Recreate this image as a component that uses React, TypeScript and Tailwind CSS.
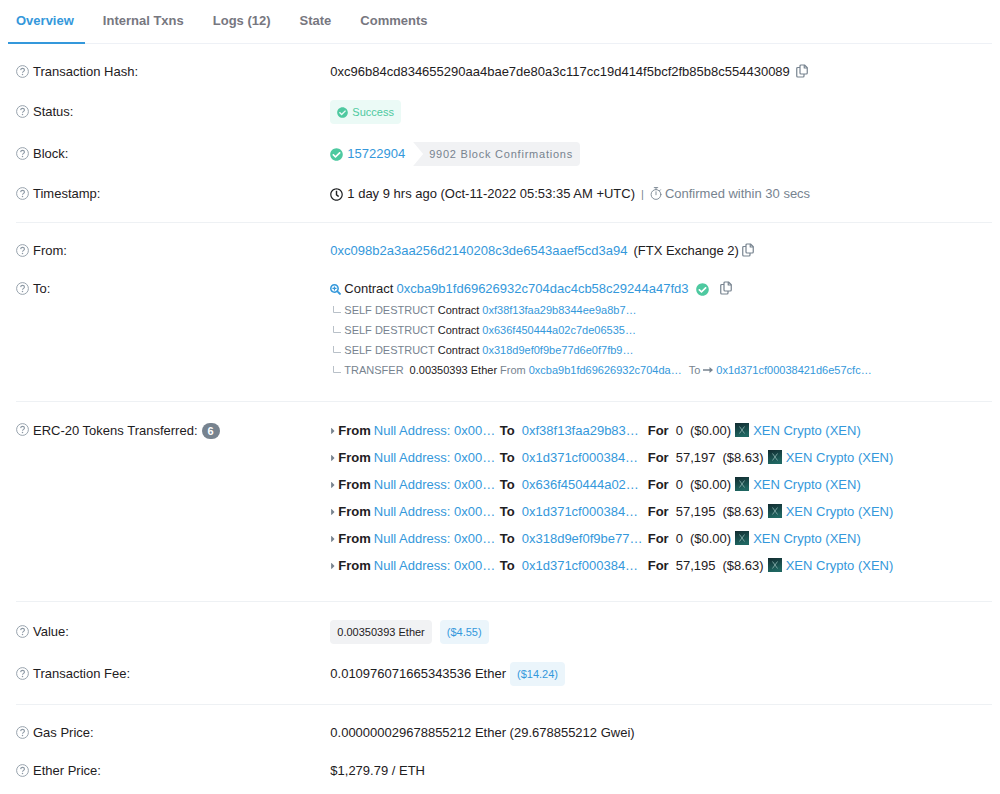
import React from "react";
import { FaCheckCircle, FaRegClock, FaCaretRight, FaSearchPlus } from "react-icons/fa";

const tabs = ["Overview", "Internal Txns", "Logs (12)", "State", "Comments"];

const destructed = ["0xf38f13faa29b8344ee9a8b7…", "0x636f450444a02c7de06535…", "0x318d9ef0f9be77d6e0f7fb9…"];

const transfers = [
  { to: "0xf38f13faa29b83…", amount: "0", usd: "($0.00)" },
  { to: "0x1d371cf000384…", amount: "57,197", usd: "($8.63)" },
  { to: "0x636f450444a02…", amount: "0", usd: "($0.00)" },
  { to: "0x1d371cf000384…", amount: "57,195", usd: "($8.63)" },
  { to: "0x318d9ef0f9be77…", amount: "0", usd: "($0.00)" },
  { to: "0x1d371cf000384…", amount: "57,195", usd: "($8.63)" },
];

const HelpIcon = () => (
  <svg viewBox="0 0 26 26" className="mb-[2px] size-[13px] shrink-0 text-[#8c98a4]" fill="none" stroke="currentColor" strokeWidth="1.8" aria-hidden="true">
    <circle cx="13" cy="13" r="11.8" />
    <path d="M9.3 10.2c.2-2.2 1.6-3.5 3.8-3.5s3.8 1.3 3.8 3.3c0 2.8-3.8 2.8-3.8 5.6" strokeWidth="2.2" />
    <circle cx="13" cy="19" r="1.5" fill="currentColor" stroke="none" />
  </svg>
);

const CopyButton = () => (
  <button type="button" aria-label="Copy" className="mb-[2px] shrink-0 cursor-pointer text-[#77838f]">
    <svg viewBox="0 0 24 28" className="h-[14px] w-3" fill="none" stroke="currentColor" strokeWidth="2.4" strokeLinejoin="round" aria-hidden="true">
      <path d="M10 2h7l5.500 5.500V18a2 2 0 0 1-2 2H10a2 2 0 0 1-2-2V4a2 2 0 0 1 2-2Z" />
      <path d="M16.500 2v6h6" />
      <path d="M8 7H3.500a2 2 0 0 0-2 2v15a2 2 0 0 0 2 2H14a2 2 0 0 0 2-2v-4" />
    </svg>
  </button>
);

const StopwatchIcon = () => (
  <svg viewBox="0 0 24 26" className="mb-[2px] h-[13px] w-3 shrink-0" fill="none" stroke="currentColor" strokeWidth="1.8" strokeLinecap="round" aria-hidden="true">
    <circle cx="12" cy="15" r="9.8" />
    <path d="M8.5 1.2h7M12 1.2v4M12 9.5v6M19 7.500l2-2" />
  </svg>
);

const BranchIcon = () => (
  <svg viewBox="0 0 8 8" className="ml-[3px] size-[8px] shrink-0 text-[#b8c0c8]" fill="none" stroke="currentColor" aria-hidden="true">
    <path d="M.5 0v6.500H8" />
  </svg>
);

const ArrowIcon = () => (
  <svg viewBox="0 0 20 12" className="h-[6px] w-[10px] shrink-0" fill="currentColor" aria-hidden="true">
    <path d="M0 4.400h13V0l7 6-7 6V7.600H0Z" />
  </svg>
);

const XenLogo = () => (
  <svg viewBox="0 0 28 28" className="mb-[2px] size-[14px] shrink-0" aria-hidden="true">
    <defs>
      <linearGradient id="xen" x1="0" y1="0" x2="0.3" y2="1">
        <stop offset="0" stopColor="#122b30" />
        <stop offset="1" stopColor="#1f6661" />
      </linearGradient>
    </defs>
    <rect width="28" height="28" fill="url(#xen)" />
    <path d="m9 7 10 14M19 7 9 21" stroke="#8fb5b3" strokeWidth="1.6" />
  </svg>
);

const Link = ({ children }: { children: React.ReactNode }) => (
  <a href="#" className="text-[#3498db] hover:underline">{children}</a>
);

type RowProps = { label: string; count?: number; className?: string; children: React.ReactNode };

const Row = ({ label, count, className = "items-center", children }: RowProps) => (
  <div className={`flex ${className}`}>
    <dt className="flex w-[32%] shrink-0 items-center gap-1">
      <HelpIcon />
      {label}
      {count && (
        <span className="rounded-full bg-[#77838f] px-[6px] text-[11px] leading-4 font-bold text-white">{count}</span>
      )}
    </dt>
    <dd className="min-w-0 flex-1 pl-[2px]">{children}</dd>
  </div>
);

const Section = ({ className, children }: { className: string; children: React.ReactNode }) => (
  <dl className={`ml-2 flex flex-col border-b border-[#eef1f4] ${className}`}>{children}</dl>
);

const App = () => {
  return (
    <main className="bg-white px-2 font-['Liberation_Sans',Arial,sans-serif] text-[13px] leading-5 whitespace-nowrap text-[#1e2022]">
      <nav className="flex gap-[10px] border-b border-[#eef1f6] font-bold text-[#77777f]">
        {tabs.map((tab, i) => (
          <a
            key={tab}
            href="#"
            className={`py-[11px] pr-[11px] pl-2 ${i === 0 ? "-mb-px border-b-2 border-[#3498db] text-[#3498db]" : ""}`}
          >
            {tab}
          </a>
        ))}
      </nav>

      <Section className="gap-[18px] py-[18px]">
        <Row label="Transaction Hash:">
          <div className="flex items-center gap-[6px]">
            0xc96b84cd834655290aa4bae7de80a3c117cc19d414f5bcf2fb85b8c554430089
            <CopyButton />
          </div>
        </Row>
        <Row label="Status:">
          <span className="inline-flex items-center gap-1 rounded bg-[#ebfaf6] px-[7px] py-[2px] text-[11px] text-[#4ec9a0]">
            <FaCheckCircle className="size-[11px]" />
            Success
          </span>
        </Row>
        <Row label="Block:">
          <div className="flex items-center">
            <FaCheckCircle className="mr-1 size-[13px] text-[#4ec9a0]" />
            <Link>15722904</Link>
            <span className="ml-2 rounded-r bg-[#f1f2f4] py-[2px] pr-[7px] pl-4 text-[11px] tracking-[0.07em] text-[#77838f] [clip-path:polygon(0_0,100%_0,100%_100%,0_100%,10px_50%)]">
              9902 Block Confirmations
            </span>
          </div>
        </Row>
        <Row label="Timestamp:">
          <div className="flex items-center gap-1">
            <FaRegClock className="size-[13px]" />
            1 day 9 hrs ago (Oct-11-2022 05:53:35 AM +UTC)
            <span className="mx-[2px] text-[11px] text-[#77838f]">|</span>
            <span className="flex items-center gap-[3px] text-[#77838f]">
              <StopwatchIcon />
              Confirmed within 30 secs
            </span>
          </div>
        </Row>
      </Section>

      <Section className="gap-[18px] pt-[18px] pb-[21px]">
        <Row label="From:">
          <div className="flex items-center gap-[3px]">
            <Link>0xc098b2a3aa256d2140208c3de6543aaef5cd3a94</Link>
            <span className="ml-[3px]">(FTX Exchange 2)</span>
            <CopyButton />
          </div>
        </Row>
        <Row label="To:" className="items-start">
          <div className="flex items-center gap-[3px]">
            <FaSearchPlus className="size-[11px] text-[#3498db]" />
            Contract
            <Link>0xcba9b1fd69626932c704dac4cb58c29244a47fd3</Link>
            <FaCheckCircle className="mx-1 size-[13px] text-[#4ec9a0]" />
            <span className="ml-1 flex">
              <CopyButton />
            </span>
          </div>
          <ul className="mt-px text-[11px]">
            {destructed.map((address) => (
              <li key={address} className="flex items-center gap-[3px]">
                <BranchIcon />
                <span className="text-[#77838f]">SELF DESTRUCT</span>
                Contract
                <Link>{address}</Link>
              </li>
            ))}
            <li className="flex items-center gap-[3px]">
              <BranchIcon />
              <span className="mr-[3px] text-[#77838f]">TRANSFER</span>
              0.00350393 Ether
              <span className="text-[#77838f]">From</span>
              <Link>0xcba9b1fd69626932c704da…</Link>
              <span className="ml-1 flex items-center gap-[3px] text-[#77838f]">
                To
                <ArrowIcon />
              </span>
              <Link>0x1d371cf00038421d6e57cfc…</Link>
            </li>
          </ul>
        </Row>
      </Section>

      <Section className="pt-[15px] pb-[22px]">
        <Row label="ERC-20 Tokens Transferred:" count={6} className="items-start leading-[27px]">
          <ul>
            {transfers.map((transfer, i) => (
              <li key={i} className="flex items-center">
                <FaCaretRight className="mr-[2px] h-[10px] w-[6px] text-[#77838f]" />
                <b className="mr-[3px]">From</b>
                <span className="w-[122px]">
                  <Link>Null Address: 0x00…</Link>
                </span>
                <b className="mx-1">To</b>
                <span className="ml-[3px] w-[122px]">
                  <Link>{transfer.to}</Link>
                </span>
                <b className="mx-1">For</b>
                <span className="ml-[3px]">{transfer.amount}</span>
                <span className="mr-1 ml-[7px]">{transfer.usd}</span>
                <XenLogo />
                <span className="ml-1">
                  <Link>XEN Crypto (XEN)</Link>
                </span>
              </li>
            ))}
          </ul>
        </Row>
      </Section>

      <Section className="gap-[18px] py-[18px]">
        <Row label="Value:">
          <div className="flex gap-2 text-[11px]">
            <span className="rounded bg-[#f1f2f4] px-[7px] py-[2px]">0.00350393 Ether</span>
            <span className="rounded bg-[#ebf5fb] px-[7px] py-[2px] text-[#3498db]">($4.55)</span>
          </div>
        </Row>
        <Row label="Transaction Fee:">
          <div className="flex items-center gap-1">
            0.010976071665343536 Ether
            <span className="rounded bg-[#ebf5fb] px-[7px] py-[2px] text-[11px] text-[#3498db]">($14.24)</span>
          </div>
        </Row>
      </Section>

      <dl className="ml-2 flex flex-col gap-[18px] pt-[18px] pb-2">
        <Row label="Gas Price:">0.000000029678855212 Ether (29.678855212 Gwei)</Row>
        <Row label="Ether Price:">$1,279.79 / ETH</Row>
      </dl>
    </main>
  );
};

export default App;
